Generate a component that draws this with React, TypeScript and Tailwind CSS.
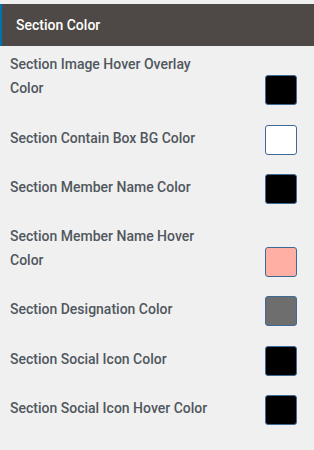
import React from "react";

type ColorField = {
    label: string;
    value: string;
};

const fields: ColorField[] = [
    { label: "Section Image Hover Overlay Color", value: "bg-[#000000]" },
    { label: "Section Contain Box BG Color", value: "bg-[#ffffff]" },
    { label: "Section Member Name Color", value: "bg-[#000000]" },
    { label: "Section Member Name Hover Color", value: "bg-[#ffafa4]" },
    { label: "Section Designation Color", value: "bg-[#6e6e6e]" },
    { label: "Section Social Icon Color", value: "bg-[#000000]" },
    { label: "Section Social Icon Hover Color", value: "bg-[#000000]" },
];

const ColorRow: React.FC<{ field: ColorField }> = ({ field }) => {
    return (
        <div className="flex items-end justify-between pl-[10px] pr-[17px]">
            <label className="w-[212px] pb-[5px] text-[14px] leading-[24px] font-medium text-[#50575e]">
                {field.label}
            </label>
            <button
                type="button"
                className={"w-[32px] h-[30px] rounded-[3px] border border-[#3e6a97] " + field.value}
            ></button>
        </div>
    );
};

const App: React.FC = () => {
    return (
        <div className="w-[314px] h-[450px] bg-[#f0f0f0] pt-[4px] font-['Roboto',sans-serif]">
            <div className="h-[42px] flex items-center bg-[#4e4946] border-l-2 border-[#0073aa] pl-[14px]">
                <span className="text-[14px] font-medium text-white">Section Color</span>
            </div>
            <div className="flex flex-col gap-[19.5px] pt-[6px]">
                {fields.map((f) => (
                    <ColorRow key={f.label} field={f} />
                ))}
            </div>
        </div>
    );
};

export default App;
